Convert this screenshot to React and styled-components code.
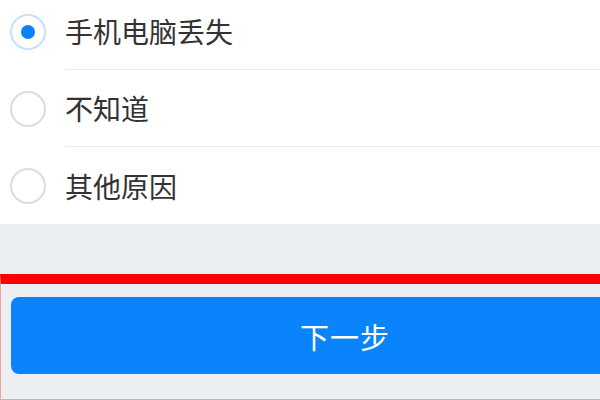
import React, { useState } from "react";
import styled, { createGlobalStyle } from "styled-components";

const Global = createGlobalStyle`
  html, body {
    margin: 0;
    padding: 0;
    background: #eceff2;
    font-family: "Noto Sans CJK SC", "Noto Sans", sans-serif;
  }
`;

const Screen = styled.div`
  width: 600px;
  height: 400px;
  overflow: hidden;
  display: flex;
  flex-direction: column;
  background: #eceff2;
`;

const List = styled.div`
  background: #fff;
  margin-top: -7px;
`;

const Row = styled.label`
  display: flex;
  align-items: stretch;
  height: 77px;
  padding-left: 10px;
  cursor: pointer;
`;

const Radio = styled.span`
  align-self: center;
  flex: none;
  box-sizing: border-box;
  width: 36px;
  height: 36px;
  border-radius: 50%;
  border: 2px solid ${p => (p.checked ? "#c7e0fb" : "#dcdcdc")};
  display: flex;
  align-items: center;
  justify-content: center;

  &::after {
    content: "";
    display: ${p => (p.checked ? "block" : "none")};
    width: 14px;
    height: 14px;
    border-radius: 50%;
    background: #0c82f8;
  }
`;

const Label = styled.div`
  flex: 1;
  display: flex;
  align-items: center;
  margin-left: 19px;
  font-size: 28px;
  color: #333;
  border-bottom: ${p => (p.last ? "none" : "1px solid #ececec")};
`;

const Spacer = styled.div`
  height: 50px;
`;

const Highlight = styled.div`
  flex: 1;
  border-top: 10px solid #ff0000;
  border-left: 1px solid #f3a0a0;
  border-bottom: 1px solid #f3a0a0;
  padding: 13px 0 0 10px;
  overflow: hidden;
`;

const NextButton = styled.button`
  display: flex;
  align-items: center;
  justify-content: center;
  width: 668px;
  height: 77px;
  border: none;
  border-radius: 8px;
  background: #0a84fc;
  color: #fff;
  font-family: inherit;
  font-size: 29px;
  letter-spacing: 1px;
`;

const reasons = ["手机电脑丢失", "不知道", "其他原因"];

export default function App() {
  const [picked, setPicked] = useState(0);
  return (
    <Screen>
      <Global />
      <List>
        {reasons.map((r, i) => (
          <Row key={r} onClick={() => setPicked(i)}>
            <Radio checked={picked === i} />
            <Label last={i === reasons.length - 1}>{r}</Label>
          </Row>
        ))}
      </List>
      <Spacer />
      <Highlight>
        <NextButton>下一步</NextButton>
      </Highlight>
    </Screen>
  );
}
